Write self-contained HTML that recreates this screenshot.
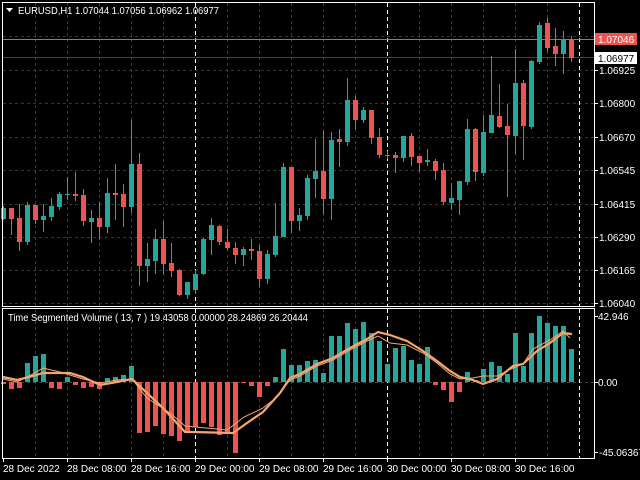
<!DOCTYPE html>
<html><head><meta charset="utf-8"><style>
html,body{margin:0;padding:0;background:#000;width:640px;height:480px;overflow:hidden}
svg{display:block}
text{font-family:"Liberation Sans",sans-serif;font-size:10px;fill:#fff}
</style></head><body>
<svg id="s" width="640" height="480" viewBox="0 0 640 480" xmlns="http://www.w3.org/2000/svg">
<rect width="640" height="480" fill="#000"/>
<g id="grid"></g>
<line x1="3" y1="39.5" x2="594" y2="39.5" stroke="#ef5350" stroke-width="1"/>
<line x1="3" y1="57.5" x2="594" y2="57.5" stroke="#3c463c" stroke-width="1"/>
<g id="c"></g>
<g id="h"></g>
<polyline id="m2" fill="none" stroke="#f5a56e" stroke-width="1"/>
<polyline id="m1" fill="none" stroke="#f5a56e" stroke-width="2.2"/>
<rect x="2.5" y="2.5" width="592" height="304" fill="none" stroke="#fff" stroke-width="1"/>
<rect x="2.5" y="308.5" width="592" height="150" fill="none" stroke="#fff" stroke-width="1"/>
<g id="ticks" stroke="#fff"></g>
<polygon points="6,8 13,8 9.5,12" fill="#fff"/>
<text x="18" y="14" style="font-size:10.5px" textLength="201" lengthAdjust="spacingAndGlyphs">EURUSD,H1  1.07044 1.07056 1.06962 1.06977</text>
<text x="8" y="321" style="font-size:10px" textLength="300" lengthAdjust="spacingAndGlyphs">Time Segmented Volume ( 13, 7 ) 19.43058 0.00000 28.24869 26.20444</text>
<text x="599" y="74">1.06925</text>
<text x="599" y="107">1.06800</text>
<text x="599" y="141">1.06670</text>
<text x="599" y="174">1.06545</text>
<text x="599" y="208">1.06415</text>
<text x="599" y="241">1.06290</text>
<text x="599" y="274">1.06165</text>
<text x="599" y="307">1.06040</text>
<rect x="595" y="33" width="42" height="12" fill="#ef5350"/>
<text x="598" y="43" style="fill:#fff">1.07046</text>
<rect x="595" y="52" width="42" height="12" fill="#fff"/>
<text x="598" y="62" style="fill:#000">1.06977</text>
<text x="598" y="320">42.946</text>
<text x="598" y="386">0.00</text>
<text x="599" y="456">-45.06367</text>
<text x="3" y="472">28 Dec 2022</text>
<text x="67" y="472">28 Dec 08:00</text>
<text x="131" y="472">28 Dec 16:00</text>
<text x="195" y="472">29 Dec 00:00</text>
<text x="259" y="472">29 Dec 08:00</text>
<text x="323" y="472">29 Dec 16:00</text>
<text x="387" y="472">30 Dec 00:00</text>
<text x="451" y="472">30 Dec 08:00</text>
<text x="515" y="472">30 Dec 16:00</text>
</svg>
<script>
var NS="http://www.w3.org/2000/svg";
function el(p,t,a){var e=document.createElementNS(NS,t);for(var k in a)e.setAttribute(k,a[k]);p.appendChild(e);return e;}
var G="#26a69a",R="#ef5350";
var grid=document.getElementById('grid');
[36,70,103,137,170,204,237,270,303].forEach(function(y){el(grid,'line',{x1:3,x2:594,y1:y+.5,y2:y+.5,stroke:'#2d3b2d','stroke-dasharray':'3,3'});});
el(grid,'line',{x1:3,x2:594,y1:382.5,y2:382.5,stroke:'#3c4a3c','stroke-dasharray':'3,3'});
for(var x=35;x<594;x+=32){var day=(x==195||x==387||x==579);
 [[3,306],[309,458]].forEach(function(r){el(grid,'line',{x1:x+.5,x2:x+.5,y1:r[0],y2:r[1],stroke:day?'#fff':'#3a3a3a','stroke-dasharray':day?'4,3':'3,3'});});}
var tk=document.getElementById('ticks');
[70,103,137,170,204,237,270,303,316,382,452].forEach(function(y){el(tk,'line',{x1:594,x2:598,y1:y+.5,y2:y+.5});});
[3,67,131,195,259,323,387,451,515].forEach(function(x){el(tk,'line',{x1:x+.5,x2:x+.5,y1:458,y2:462});});
var d=[
"g 206 220 208 219","r 208 235 208 219","r 204 251 218 242","g 202 245 205 242","r 205 224 205 220",
"g 204 232 216 220","g 198 221 206 217","g 192 210 194 207","g 177 200 194 195","r 172 201 194 196",
"r 189 226 195 221","g 210 243 218 222","r 202 239 218 227","g 178 233 193 227","r 164 220 193 195",
"r 184 227 194 207","g 120 213 164 207","r 153 286 164 266","g 243 282 259 266","g 229 274 239 261",
"r 221 274 239 264","r 243 277 263 271","r 269 296 270 295","g 282 299 282 295","g 270 294 274 290",
"g 238 275 239 274","g 218 255 225 240","r 225 245 226 242","r 229 250 242 248","r 242 264 248 255",
"g 247 266 249 255","r 239 260 249 251","r 245 287 251 279","g 250 284 254 279","g 203 257 236 255",
"g 163 237 167 237","r 167 233 167 221","g 208 231 215 221","g 175 220 178 216","g 139 198 171 179",
"r 131 214 171 199","g 132 220 140 199","r 129 167 139 142","g 78 146 100 142","r 96 129 100 120",
"g 107 123 110 120","r 110 144 110 138","r 128 158 137 155","g 151 159 155 156","r 152 173 155 158",
"g 136 162 136 158","r 133 166 136 157","r 156 172 156 163","g 149 166 160 162","r 159 180 161 171",
"r 163 205 170 202","g 183 210 198 203","g 181 215 181 200","g 119 185 129 182","r 128 181 129 172",
"g 115 176 132 173","g 56 133 115 133","r 84 128 116 127","r 104 197 126 135","g 49 154 83 136",
"r 80 160 83 126","g 60 129 61 127","g 22 64 25 62","r 18 52 23 48","r 28 66 46 54",
"g 31 74 40 54","r 36 62 40 58"];
var cg=document.getElementById('c');
d.forEach(function(s,k){var p=s.split(' '),col=p[0]=='g'?G:R,hi=+p[1],lo=+p[2],t=+p[3],b=+p[4],c=3+8*k;
 el(cg,'rect',{x:c,y:hi,width:1,height:lo-hi,fill:col});
 el(cg,'rect',{x:c-2,y:t,width:5,height:Math.max(1,b-t),fill:col});});
var h=[384,389,388,-363,-356,-354,388,389,-377,385,388,387,389,-378,-377,-375,-366,433,432,426,434,436,441,432,427,423,427,435,434,453,383,386,397,386,-377,-349,-365,-365,-361,-360,-373,-336,-336,-323,-329,-322,-333,-341,-364,-348,-346,-360,-364,-347,385,390,402,392,-372,-380,-369,-362,-366,-374,-333,-366,-333,-316,-323,-326,-326,-349];
var hg=document.getElementById('h');
h.forEach(function(v,k){var c=3+8*k;if(v<0){v=-v;el(hg,'rect',{x:c-2,y:v,width:5,height:382-v,fill:G});}else el(hg,'rect',{x:c-2,y:382,width:5,height:v-382,fill:R});});
document.getElementById('m1').setAttribute('points',"3,377 17,380 33,376 43,373 70,373 83,377 100,385 117,382 132,379 147,393 163,408 185,432 193,432 233,433 247,423 263,412 280,393 290,378 300,374 317,364 333,358 350,348 367,339 378,332 390,335 407,341 423,351 437,361 450,371 460,377 473,380 483,384 497,379 513,366 523,364 537,351 550,343 563,333 572,334");
document.getElementById('m2').setAttribute('points',"3,379 17,382 33,374 43,368 60,372 83,379 100,383 117,380 132,379 147,398 170,413 185,426 227,430 244,417 263,408 277,397 290,380 300,376 317,366 333,360 350,350 367,341 378,336 390,343 407,345 423,353 437,363 450,374 460,379 473,378 483,376 497,376 513,368 523,364 533,349 550,340 563,331 570,338");
</script>
</body></html>
